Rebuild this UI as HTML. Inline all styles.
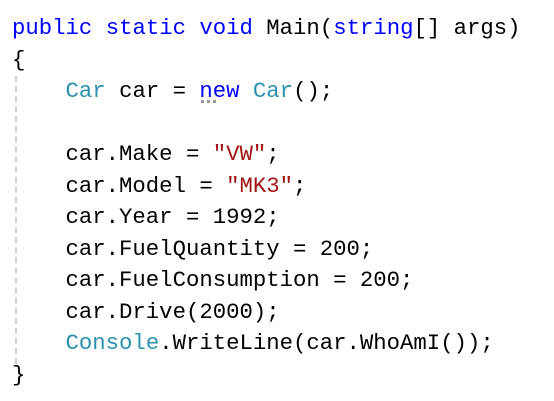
<!DOCTYPE html>
<html><head><style>
html,body{margin:0;padding:0;background:#fff;width:554px;height:401px;overflow:hidden}
pre{position:absolute;left:12px;top:13px;margin:0;font-family:"Liberation Mono",monospace;font-size:22.3px;line-height:31.5px;color:#000}
.k{color:#0000ff}.t{color:#2b91af}.s{color:#a31515}
.g{position:absolute;left:15px;top:76px;height:288px;border-left:2px dashed #d0d0d0}
.d{position:absolute;left:201px;top:100px;width:18px;height:3px;background:repeating-linear-gradient(90deg,#999 0 3px,transparent 3px 6px)}
</style></head><body>
<div class="g"></div><div class="d"></div>
<pre><span class="k">public</span> <span class="k">static</span> <span class="k">void</span> Main(<span class="k">string</span>[] args)
{
    <span class="t">Car</span> car = <span class="k">new</span> <span class="t">Car</span>();

    car.Make = <span class="s">"VW"</span>;
    car.Model = <span class="s">"MK3"</span>;
    car.Year = 1992;
    car.FuelQuantity = 200;
    car.FuelConsumption = 200;
    car.Drive(2000);
    <span class="t">Console</span>.WriteLine(car.WhoAmI());
}</pre>
</body></html>
